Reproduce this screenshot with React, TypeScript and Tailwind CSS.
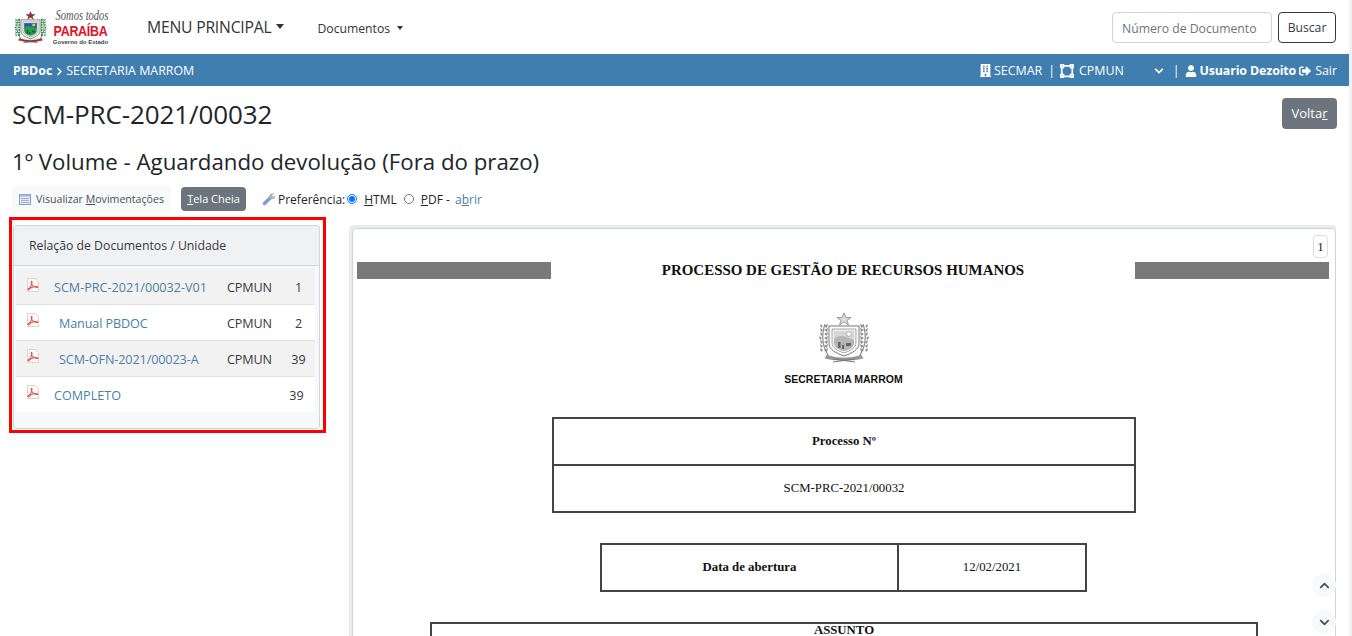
import React from "react";
import { FaBuilding, FaVectorSquare, FaChevronDown, FaChevronUp, FaUser, FaSignOutAlt, FaChevronRight } from "react-icons/fa";

const Pdf = () => (
  <svg width="14" height="15" viewBox="0 0 14 15" className="shrink-0">
    <path d="M1.500.5h8l3 3v10h-11z" fill="#fafafa" stroke="#d8d4d4" />
    <path d="M2 11c2-1 3.500-3.500 4-6.500.2-1.500-1-1.500-.8 0 .4 2.500 2 4.500 5.500 5 1.500.2 1.500-1 0-1C8 8.300 4 10 3 11.500c-.5.7-1 .2-1-.5z" fill="none" stroke="#e2574c" strokeWidth="1.100" />
  </svg>
);

const Leaves = ({ side, color }: { side: number; color: string }) => (
  <g transform={side < 0 ? "translate(52 0) scale(-1 1)" : undefined}>
    <path d="M7 12c-3 9-4 20 3 31" fill="none" stroke={color} strokeWidth="1.200" />
    {[14, 18, 22, 26, 30, 34, 38].map((y, i) => (
      <g key={y}>
        <path d={`M${5 - (i === 3 ? 1 : 0)} ${y}l-3 -2 1 4z`} fill={color} />
        <path d={`M${6} ${y}l4 -2 -1 4z`} fill={color} />
      </g>
    ))}
  </g>
);

const Coat = ({ gray = false }: { gray?: boolean }) => {
  const g = gray ? "#8d8d8d" : "#1d7a3c";
  const b = gray ? "#d6d6d6" : "#1f5fa8";
  const f = gray ? "#b5b5b5" : "#2f9a52";
  const r = gray ? "#9a9a9a" : "#c8202c";
  const l = gray ? "#777" : "#444";
  return (
    <svg viewBox="0 0 52 52" width="100%" height="100%">
      <path d="M26 1l2 4.500h5l-4 3 1.500 4.500-4.500-3-4.500 3 1.500-4.500-4-3h5z" fill={gray ? "#ddd" : "#b3202a"} stroke={l} strokeWidth=".7" />
      <Leaves side={1} color={g} />
      <Leaves side={-1} color={g} />
      <path d="M11 14h30v17c0 7-7 10-15 13-8-3-15-6-15-13z" fill="#fff" stroke={l} strokeWidth="1" />
      <path d="M14 17h24v14c0 5-6 8-12 10-6-2-12-5-12-10z" fill={gray ? "#eee" : "#f0f0f0"} stroke={l} strokeWidth=".6" />
      <path d="M16 19h20v9H16z" fill={b} />
      <circle cx="31" cy="22" r="2.300" fill={gray ? "#fff" : "#f4d21f"} stroke={gray ? "#888" : "none"} strokeWidth=".5" />
      <path d="M16 27c4-4 9-4 20 1v3c0 4-5 7-10 8-5-1-10-4-10-8z" fill={f} />
      <path d="M20 30h2.500v6H20zM28 31h5v3h-5zM24 33h2v4h-2z" fill={gray ? "#666" : "#135a2b"} />
      <path d="M9 43c8 4 26 4 34 0l2 3c-8 3-30 3-38 0z" fill={r} stroke={l} strokeWidth=".5" />
      <path d="M15 50l22-3M37 50l-22-3" stroke={l} strokeWidth="1" />
    </svg>
  );
};

const rows = [
  { name: "SCM-PRC-2021/00032-V01", unit: "CPMUN", n: "1", indent: false, bg: "bg-[#f2f2f2]", h: "h-[37px] pt-[5px]", np: "pl-[6px]" },
  { name: "Manual PBDOC", unit: "CPMUN", n: "2", indent: true, bg: "bg-white", h: "h-[36px] pt-[3px]", np: "pl-[6px]" },
  { name: "SCM-OFN-2021/00023-A", unit: "CPMUN", n: "39", indent: true, bg: "bg-[#f2f2f2]", h: "h-[36px] pt-[3px]", np: "pl-[6px]" },
  { name: "COMPLETO", unit: "", n: "39", indent: false, bg: "bg-white", h: "h-[35px] pt-[3px]", np: "pl-[2px]" },
];

export default function App() {
  return (
    <div className="h-screen overflow-hidden flex bg-white text-[#212529] font-['Open_Sans','Noto_Sans',sans-serif]">
      <div className="flex-1 min-w-0 relative">
        <nav className="h-[54px] flex items-center pl-[14px] pr-[13px]">
          <div className="w-[33px] h-[35px]"><Coat /></div>
          <div className="ml-[7px] w-[53px] flex flex-col items-center leading-none">
            <span className="font-['Liberation_Serif',serif] italic text-[10.500px] leading-[14px] text-[#555] whitespace-nowrap pl-[3px] scale-y-[1.3]">Somos todos</span>
            <span className="font-['Liberation_Sans',sans-serif] font-bold text-[12.500px] leading-[14px] mt-[1px] text-[#e0142b] tracking-[-0.3px] scale-y-[1.2]">PARAÍBA</span>
            <span className="font-['Liberation_Sans',sans-serif] text-[6px] leading-[8px] font-bold text-[#444] whitespace-nowrap">Governo do Estado</span>
          </div>
          <div className="ml-[40px] mt-[2px] flex items-center text-[15.700px] tracking-[-0.2px] text-[#333]">
            MENU PRINCIPAL
            <span className="ml-[5px] border-x-[4.500px] border-x-transparent border-t-[5px] border-t-[#333] -mt-[3px]" />
          </div>
          <div className="ml-[33px] flex items-center text-[12.200px] text-[#333] mt-[5px]">
            Documentos
            <span className="ml-[7px] border-x-[3.500px] border-x-transparent border-t-[4px] border-t-[#333] -mt-[2px]" />
          </div>
          <div className="ml-auto flex items-center gap-[6px]">
            <div className="w-[160px] h-[31px] rounded border border-[#ced4da] flex items-center pl-[9px] pt-[4px] text-[12.200px] text-[#6c757d] whitespace-nowrap">Número de Documento</div>
            <button className="w-[58px] h-[31px] rounded border border-[#343a40] pt-[2px] text-[12.200px] text-[#343a40]">Buscar</button>
          </div>
        </nav>

        <div className="h-[32px] bg-[#3f7eae] text-white flex items-center pl-[13px] pr-[12px] pt-[2px] text-[12.400px]">
          <b>PBDoc</b>
          <FaChevronRight className="ml-[3px] mr-[2px] text-[9px]" />
          <span>SECRETARIA MARROM</span>
          <div className="ml-auto flex items-center">
            <FaBuilding className="text-[13px]" />
            <span className="ml-[2px]">SECMAR</span>
            <span className="ml-[6px]">|</span>
            <FaVectorSquare className="ml-[5px] text-[14px]" />
            <span className="ml-[5px]">CPMUN</span>
            <FaChevronDown className="ml-[30px] text-[10px]" />
            <span className="ml-[9px]">|</span>
            <FaUser className="ml-[5px] text-[12px]" />
            <b className="ml-[3px] tracking-[-0.13px]">Usuario Dezoito</b>
            <FaSignOutAlt className="ml-[3px] text-[12px]" />
            <span className="ml-[4px]">Sair</span>
          </div>
        </div>

        <div className="flex items-start justify-between pl-[12px] pr-[12px] pt-[10px]">
          <h1 className="text-[26px] leading-[36px] font-normal text-[#212529] tracking-[-0.1px]">SCM-PRC-2021/00032</h1>
          <button className="w-[55px] h-[31px] rounded bg-[#6c757d] text-white text-[13px] mt-[2px]">Volta<u>r</u></button>
        </div>

        <h2 className="pl-[12px] mt-[15px] text-[22.250px] leading-[30px] font-medium text-[#212529]">1º Volume - Aguardando devolução (Fora do prazo)</h2>

        <div className="flex items-center mt-[9px] pl-[12px] h-[26px] text-[12px]">
          <div className="h-[26px] w-[159px] bg-[#f8f9fa] rounded flex items-center pl-[7px] text-[10.600px] text-[#495057] whitespace-nowrap">
            <svg width="12" height="11" viewBox="0 0 12 11" className="mr-[5px] shrink-0"><rect x=".5" y=".5" width="11" height="10" fill="#e4e8ee" stroke="#7f9fcc" /><path d="M1 1.500h10" stroke="#9db9e0" strokeWidth="2" /><path d="M2 4.500h8M2 6.500h8M2 8.500h8" stroke="#a8b0bc" /></svg>
            <span className="mt-[2px]">Visualizar&nbsp;<u>M</u>ovimentações</span>
          </div>
          <div className="ml-[10px] h-[24px] w-[65px] bg-[#6c757d] rounded text-white text-[11px] flex items-center justify-center"><span className="mt-[1px]"><u>T</u>ela Cheia</span></div>
          <svg width="14" height="14" viewBox="0 0 14 14" className="ml-[16px] shrink-0"><path d="M2.500 11.500l5.500-5.500" stroke="#7aa2d6" strokeWidth="3.500" strokeLinecap="round" /><path d="M7.500 6.500c-1.500-3 1.500-6 4.500-5l-2 2 1 1.500 2.200-1.500c.6 2.500-2.500 5-5.700 3z" fill="#b0b0b0" /></svg>
          <span className="ml-[2px] mt-[2px]">Preferência:</span>
          <span className="ml-[2px] w-[10px] h-[10px] rounded-full border border-[#0075ff] flex items-center justify-center"><span className="w-[6px] h-[6px] rounded-full bg-[#0075ff]" /></span>
          <span className="ml-[7px] mt-[2px]"><u>H</u>TML</span>
          <span className="ml-[7px] w-[10px] h-[10px] rounded-full border border-[#767676]" />
          <span className="ml-[7px] mt-[2px]"><u>P</u>DF - <span className="ml-[2px] text-[#4a7fa8]">a<u>b</u>rir</span></span>
        </div>

        <div className="flex items-start mt-[5px]">
          <div className="ml-[9px] w-[317px] border-[3px] border-[#ff0000] bg-white pt-[5px] px-[1px] pb-[1px] shrink-0">
            <div className="w-[307px] bg-[#f7f8f9] border border-[#d3d6d9] rounded-[3px] h-[204px] overflow-hidden">
              <div className="h-[40px] bg-[#f0f1f3] border-b border-[#d3d6d9] flex items-center pl-[15px] pt-[2px] text-[12.250px] text-[#343a40]">Relação de Documentos / Unidade</div>
              <div className="ml-[2px] mr-[4px] mt-[2px]">
                {rows.map((r, i) => (
                  <div key={i} className={`flex items-center text-[12.600px] ${r.h} ${r.bg} ${i < 3 ? "border-b border-[#dee2e6]" : ""}`}>
                    <div className="w-[38px] pl-[10px] -mt-[7px]"><Pdf /></div>
                    <span className={`text-[#4a7fa8] w-[173px] whitespace-nowrap ${r.indent ? "pl-[5px] tracking-[-0.1px]" : ""}`}>{r.name}</span>
                    <span className="w-[49px] text-[#343a40] tracking-[-0.1px]">{r.unit}</span>
                    <span className={`flex-1 text-center text-[#343a40] ${r.np}`}>{r.n}</span>
                  </div>
                ))}
              </div>
            </div>
          </div>

          <div className="ml-[23px] flex-1 mr-[13px] mt-[8px] bg-[#e9ecef] pl-[3px] pt-[3px] rounded-t">
            <div className="h-[500px] bg-white border border-[#d0d4d8] rounded-t-[4px] pl-[4px] pr-[6px] pt-[6px] font-['Liberation_Serif',serif] text-[#111]">
              <div className="flex justify-end mr-[1px]">
                <span className="w-[15px] h-[23px] border border-[#ddd] rounded text-[12px] flex items-center justify-center">1</span>
              </div>
              <div className="flex items-center mt-[4px] h-[17px]">
                <div className="w-[194px] h-[17px] bg-[#7a7a7a]" />
                <div className="flex-1 text-center font-bold text-[14.950px] whitespace-nowrap">PROCESSO DE GESTÃO DE RECURSOS HUMANOS</div>
                <div className="w-[194px] h-[17px] bg-[#7a7a7a]" />
              </div>
              <div className="flex flex-col items-center mt-[33px] pl-[1px]">
                <div className="w-[54px] h-[52px]"><Coat gray /></div>
                <div className="mt-[9px] font-['Liberation_Sans',sans-serif] font-bold text-[10.500px] leading-[12px]">SECRETARIA MARROM</div>
              </div>
              <div className="w-[584px] ml-[195px] mt-[32px] border-2 border-[#444] text-[12.800px]">
                <div className="h-[47px] border-b-2 border-[#444] flex items-center justify-center font-bold">Processo Nº</div>
                <div className="h-[45px] flex items-center justify-center">SCM-PRC-2021/00032</div>
              </div>
              <div className="w-[487px] ml-[243px] mt-[30px] border-2 border-[#444] text-[12.800px] flex h-[49px]">
                <div className="w-[297px] border-r-2 border-[#444] flex items-center justify-center font-bold">Data de abertura</div>
                <div className="flex-1 flex items-center justify-center">12/02/2021</div>
              </div>
              <div className="w-[828px] ml-[73px] mt-[30px] border-2 border-[#444] text-[12.800px] leading-[12px] text-center font-bold h-[60px]">ASSUNTO</div>
            </div>
          </div>
        </div>

        <div className="absolute left-[1312px] top-[573px] w-[24px] h-[24px] rounded-full bg-[#f8f9fa] flex items-center justify-center text-[#495057] text-[11px]"><FaChevronUp /></div>
        <div className="absolute left-[1312px] top-[610px] w-[24px] h-[24px] rounded-full bg-[#f8f9fa] flex items-center justify-center text-[#495057] text-[11px]"><FaChevronDown /></div>
      </div>
      <div className="w-[3px] bg-[#f1f1f1]" />
    </div>
  );
}
